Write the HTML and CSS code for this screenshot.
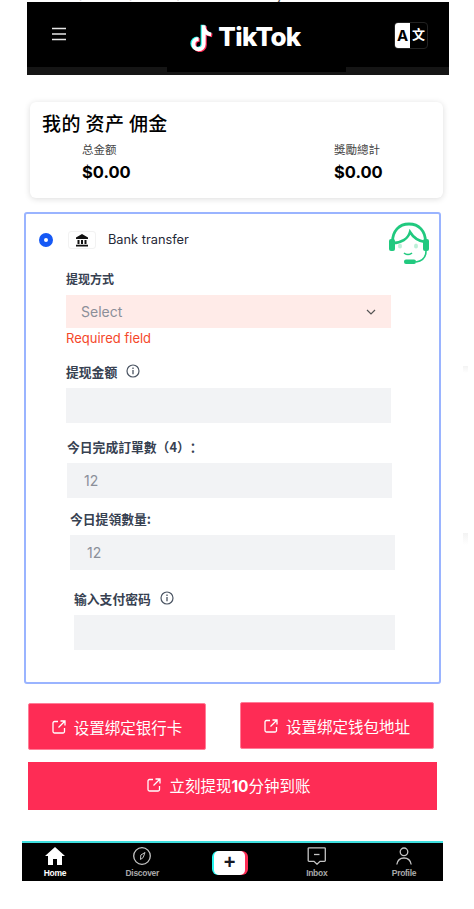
FILE: index.html
```html
<!DOCTYPE html>
<html lang="zh">
<head>
<meta charset="utf-8">
<title>TikTok</title>
<link rel="stylesheet" href="styles.css">
</head>
<body>
<div class="smudge smudge-a"></div>
<div class="smudge smudge-b"></div>
<header class="header">
  <div class="ticker"><div class="ticker-text">Your assets and share them with your followers to show</div></div>
  <div class="bar">
    <svg class="menu" width="14" height="14" viewBox="0 0 14 14"><path d="M0 1.500h14M0 7h14M0 12.500h14" stroke="#e6e6e6" stroke-width="1.600"/></svg>
    <div class="logo">
      <svg width="24" height="29" viewBox="2 0 21 25.400">
        <path d="M14 2v16.500a4.500 4.500 0 1 1-4.500-4.500M14 4c.6 3.500 3 5.500 6.500 6" fill="none" stroke="#25f4ee" stroke-width="3.400" transform="translate(-1 -.5)"/>
        <path d="M14 2v16.500a4.500 4.500 0 1 1-4.500-4.500M14 4c.6 3.500 3 5.500 6.500 6" fill="none" stroke="#fe2c55" stroke-width="3.400" transform="translate(1 .8)"/>
        <path d="M14 2v16.500a4.500 4.500 0 1 1-4.500-4.500M14 4c.6 3.500 3 5.500 6.500 6" fill="none" stroke="#fff" stroke-width="3.400"/>
      </svg>
      <span class="logo-text">TikTok</span>
    </div>
    <div class="lang"><span class="lang-a">A</span><span class="lang-b">文</span></div>
  </div>
  <div class="strip"><div class="strip-mid"></div></div>
</header>

<section class="card">
  <h1 class="card-title">我的 资产 佣金</h1>
  <div class="stats">
    <div class="stat"><div class="stat-label">总金额</div><div class="stat-value">$0.00</div></div>
    <div class="stat"><div class="stat-label">獎勵總計</div><div class="stat-value">$0.00</div></div>
  </div>
</section>

<section class="panel">
  <svg class="agent" width="42" height="44" viewBox="0 0 42 44" fill="none">
    <path d="M4.500 20C4.500 9 11 2 21 2s16.500 7 16.500 18" stroke="#21c97f" stroke-width="2.800"/>
    <path d="M5 21c8 0 15-4 17-11 3 5 8 9 15 10" stroke="#21c97f" stroke-width="2.600"/>
    <rect x="1" y="17" width="6" height="12" rx="2" fill="#21c97f"/>
    <rect x="35" y="17" width="6" height="12" rx="2" fill="#21c97f"/>
    <path d="M38 29c0 6-4 10-10 11" stroke="#21c97f" stroke-width="1.600"/>
    <rect x="16" y="37.500" width="12" height="4.500" rx="2" fill="#21c97f"/>
    <path d="M16 31c2 2 6 2 8 0" stroke="#21c97f" stroke-width="1.600"/>
    <ellipse cx="12" cy="24" rx="2" ry="2.600" fill="#bdf0d8"/>
    <ellipse cx="28" cy="24" rx="2" ry="2.600" fill="#bdf0d8"/>
  </svg>
  <div class="method">
    <span class="radio"></span>
    <span class="bank-box">
      <svg width="14" height="14" viewBox="0 0 14 14"><path d="M7 1 1 4.500v1.500h12V4.500zM2.500 7h2v4h-2zM6 7h2v4H6zM9.500 7h2v4h-2zM1 11.800h12V13.500H1z" fill="#111"/></svg>
    </span>
    <span class="method-name">Bank transfer</span>
  </div>

  <div class="field f-a f-first">
    <label class="label label-small">提现方式</label>
    <div class="input select">
      <span class="select-text">Select</span>
      <svg width="10" height="6" viewBox="0 0 10 6" fill="none"><path d="M1 1l4 4 4-4" stroke="#555" stroke-width="1.200"/></svg>
    </div>
    <div class="error">Required field</div>
  </div>

  <div class="field f-a f-amount">
    <label class="label">提现金额
      <svg class="info" width="14" height="14" viewBox="0 0 14 14" fill="none"><circle cx="7" cy="7" r="6" stroke="#4b5563" stroke-width="1.200"/><path d="M7 6v4.200M7 3.600v1.400" stroke="#4b5563" stroke-width="1.300"/></svg>
    </label>
    <div class="input"></div>
  </div>

  <div class="field f-b f-orders">
    <label class="label">今日完成訂單數（4）：</label>
    <div class="input"><span class="value">12</span></div>
  </div>

  <div class="field f-c f-claims">
    <label class="label">今日提領數量:</label>
    <div class="input"><span class="value">12</span></div>
  </div>

  <div class="field f-d f-pass">
    <label class="label">输入支付密码
      <svg class="info" width="14" height="14" viewBox="0 0 14 14" fill="none"><circle cx="7" cy="7" r="6" stroke="#4b5563" stroke-width="1.200"/><path d="M7 6v4.200M7 3.600v1.400" stroke="#4b5563" stroke-width="1.300"/></svg>
    </label>
    <div class="input"></div>
  </div>
</section>

<div class="btn-row">
  <a class="btn btn-card">
    <svg class="ext" width="14" height="14" viewBox="0 0 14 14" fill="none"><path d="M6 1.500H2.500a1.500 1.500 0 0 0-1.500 1.500v8.500A1.500 1.500 0 0 0 2.500 13H11a1.500 1.500 0 0 0 1.500-1.500V8M8.500 1H13v4.500M13 1 6.500 7.500" stroke="#fff" stroke-width="1.300"/></svg>
    设置绑定银行卡
  </a>
  <a class="btn btn-wallet">
    <svg class="ext" width="14" height="14" viewBox="0 0 14 14" fill="none"><path d="M6 1.500H2.500a1.500 1.500 0 0 0-1.500 1.500v8.500A1.500 1.500 0 0 0 2.500 13H11a1.500 1.500 0 0 0 1.500-1.500V8M8.500 1H13v4.500M13 1 6.500 7.500" stroke="#fff" stroke-width="1.300"/></svg>
    设置绑定钱包地址
  </a>
</div>
<a class="btn btn-wide">
  <svg class="ext" width="14" height="14" viewBox="0 0 14 14" fill="none"><path d="M6 1.500H2.500a1.500 1.500 0 0 0-1.500 1.500v8.500A1.500 1.500 0 0 0 2.500 13H11a1.500 1.500 0 0 0 1.500-1.500V8M8.500 1H13v4.500M13 1 6.500 7.500" stroke="#fff" stroke-width="1.300"/></svg>
  <span>立刻提现<b class="btn-num">10</b>分钟到账</span>
</a>

<nav class="nav">
  <div class="nav-item active">
    <svg width="20" height="18" viewBox="0 0 20 18"><path d="M10 0 0 9h3v9h5v-6h4v6h5V9h3z" fill="#fff"/></svg>
    <span class="nav-label">Home</span>
  </div>
  <div class="nav-item">
    <svg width="20" height="18" viewBox="0 0 20 18" fill="none"><circle cx="10" cy="9" r="8.300" stroke="#c4c4c4" stroke-width="1.300"/><path d="M13 5.500 11.200 10.500 8.500 12.500 8.800 8z" stroke="#c4c4c4" stroke-width="1"/></svg>
    <span class="nav-label">Discover</span>
  </div>
  <div class="nav-item">
    <div class="plus"><div class="plus-inner">+</div></div>
  </div>
  <div class="nav-item">
    <svg width="20" height="18" viewBox="0 0 20 18" fill="none"><path d="M2 .8h15.500a.8.8 0 0 1 .8.800V13.500a.8.8 0 0 1-.8.800H13L10 17.200 7 14.300H2a.8.800 0 0 1-.8-.8V1.600A.8.800 0 0 1 2 .8z" stroke="#c4c4c4" stroke-width="1.300"/><path d="M7 7.500h5.500" stroke="#c4c4c4" stroke-width="1.300"/></svg>
    <span class="nav-label">Inbox</span>
  </div>
  <div class="nav-item">
    <svg width="20" height="18" viewBox="0 0 20 18" fill="none"><circle cx="10" cy="4.800" r="3.800" stroke="#c4c4c4" stroke-width="1.300"/><path d="M2.800 17.500c.8-4.500 3.500-6.500 7.200-6.500s6.400 2 7.200 6.500" stroke="#c4c4c4" stroke-width="1.300"/></svg>
    <span class="nav-label">Profile</span>
  </div>
</nav>
</body>
</html>
```
FILE: styles.css
```css
* { box-sizing: border-box; }
html, body { margin: 0; padding: 0; background: #fff; }
body {
  position: relative;
  width: 474px;
  height: 909px;
  overflow: hidden;
  font-family: Inter, "Noto Sans CJK SC", sans-serif;
  color: #1f2937;
}

.smudge {
  position: absolute;
  left: 463px;
  width: 5px;
  height: 12px;
  background: linear-gradient(#f3f3f3, #fff);
}
.smudge-a { top: 366px; height: 7px; }
.smudge-b { top: 533px; }

.header { width: 422px; margin-left: 27px; }
.ticker { height: 2px; overflow: hidden; background: #fff; }
.ticker-text {
  margin-top: -13px;
  height: 15px;
  text-align: center;
  font-size: 15px;
  line-height: 15px;
  color: #555;
  white-space: nowrap;
}
.bar {
  height: 65px;
  background: #000;
  display: flex;
  align-items: center;
  justify-content: space-between;
  padding: 0 21px 0 25px;
  position: relative;
}
.menu { display: block; margin-top: -1px; }
.logo {
  display: flex;
  align-items: center;
  gap: 4px;
  margin: 5px 0 0 31px;
}
.logo-text {
  font-family: Inter, sans-serif;
  font-weight: 800;
  font-size: 26px;
  line-height: 28px;
  letter-spacing: -0.6px;
  color: #fff;
}
.lang {
  width: 34px;
  height: 27px;
  margin-top: 2px;
  border: 1px solid #222;
  border-radius: 4px;
  display: flex;
  align-items: stretch;
  overflow: hidden;
  font-family: "Noto Sans CJK SC", sans-serif;
  font-weight: 700;
}
.lang-a {
  width: 15px;
  background: #fff;
  color: #000;
  font-family: Inter, sans-serif;
  font-size: 15px;
  line-height: 25px;
  text-align: center;
}
.lang-b {
  flex: 1;
  color: #fff;
  font-size: 13px;
  line-height: 21px;
  text-align: center;
}
.strip {
  height: 8px;
  background: #151515;
  display: flex;
  justify-content: center;
}
.strip-mid { width: 179px; height: 5px; background: #000; margin-left: 37px; }

.card {
  width: 413px;
  height: 96px;
  margin: 27px 0 0 30px;
  padding: 9px 12px 0;
  background: #fff;
  border-radius: 6px;
  box-shadow: 0 1px 6px rgba(0, 0, 0, 0.14);
}
.card-title {
  margin: 0;
  font-family: "Noto Sans CJK SC", sans-serif;
  font-size: 19px;
  line-height: 24px;
  letter-spacing: 0.4px;
  font-weight: 500;
  color: #000;
}
.stats {
  display: flex;
  justify-content: space-between;
  margin: 7px 49px 0 40px;
}
.stat { width: 48px; }
.stat-label {
  font-family: "Noto Sans CJK SC", sans-serif;
  font-size: 11.500px;
  line-height: 15px;
  color: #444;
  white-space: nowrap;
}
.stat-value {
  margin-top: 4px;
  font-family: Inter, sans-serif;
  font-size: 16.500px;
  line-height: 22px;
  font-weight: 700;
  color: #000;
  white-space: nowrap;
}

.panel {
  position: relative;
  width: 417px;
  height: 472px;
  margin: 14px 0 0 24px;
  border: 2px solid #9ab4ff;
  border-radius: 3px;
  background: #fff;
}
.agent { position: absolute; top: 8px; right: 9px; }
.method {
  display: flex;
  align-items: center;
  height: 18px;
  margin: 17px 0 0 13px;
}
.radio {
  width: 14px;
  height: 14px;
  border-radius: 50%;
  border: 5px solid #1659f5;
  background: #fff;
  flex: none;
}
.bank-box {
  width: 28px;
  height: 18px;
  margin-left: 15px;
  border: 1px solid #f2f2f2;
  border-radius: 3px;
  display: flex;
  align-items: center;
  justify-content: center;
}
.method-name {
  margin-left: 12px;
  font-size: 12.800px;
  line-height: 16px;
  color: #1f2937;
}

.field { display: block; }
.f-a { margin-left: 40px; width: 325px; }
.f-b { margin-left: 41px; width: 325px; }
.f-c { margin-left: 44px; width: 325px; }
.f-d { margin-left: 48px; width: 321px; }
.f-first { margin-top: 21px; }
.f-amount { margin-top: 16px; }
.f-orders { margin-top: 15px; }
.f-claims { margin-top: 12px; }
.f-pass { margin-top: 20px; }

.label {
  display: flex;
  align-items: center;
  height: 16px;
  margin-bottom: 9px;
  font-family: "Noto Sans CJK SC", sans-serif;
  font-size: 12.800px;
  font-weight: 600;
  color: #374151;
  white-space: nowrap;
  text-spacing-trim: space-all;
}
.label-small { font-size: 12px; }
.info { margin-left: 9px; }
.input {
  height: 35px;
  background: #f2f3f5;
  display: flex;
  align-items: center;
  padding: 0 15px 0 17px;
}
.select {
  height: 33px;
  background: #ffebe8;
  justify-content: space-between;
  padding: 0 15px;
}
.select-text { font-size: 14px; color: #8b8f99; }
.value { font-size: 14px; color: #8b8f99; }
.error {
  height: 18px;
  margin-top: 1px;
  font-size: 13px;
  line-height: 18px;
  color: #f5472a;
}

.btn {
  display: flex;
  align-items: center;
  justify-content: center;
  background: #fe2c55;
  color: #fff;
  font-family: "Noto Sans CJK SC", sans-serif;
  font-size: 15.500px;
  gap: 8px;
}
.ext { flex: none; }
.btn-row {
  display: flex;
  align-items: flex-start;
  margin: 18px 0 0 28px;
}
.btn-card {
  width: 178px;
  height: 47px;
  margin-top: 1px;
  border: 1px solid #ff7d97;
  border-radius: 2px;
}
.btn-wallet {
  width: 194px;
  height: 47px;
  margin-left: 34px;
  border: 1px solid #ff7d97;
  border-radius: 2px;
}
.btn-wide {
  width: 409px;
  height: 48px;
  margin: 12px 0 0 28px;
  padding: 0 7px 3px 0;
}
.btn-num { font-family: Inter, sans-serif; font-weight: 700; }

.nav {
  width: 421px;
  height: 40px;
  margin: 31px 0 0 22px;
  background: #000;
  border-top: 2px solid #3fe0e0;
  display: flex;
  gap: 21.250px;
}
.nav-item {
  width: 66px;
  display: flex;
  flex-direction: column;
  align-items: center;
  padding-top: 4px;
}
.nav-label {
  margin-top: 2px;
  font-family: "Liberation Sans", sans-serif;
  font-size: 8.500px;
  letter-spacing: -0.300px;
  line-height: 12px;
  font-weight: 700;
  color: #a8a8a8;
}
.active .nav-label { color: #fff; }
.plus {
  width: 36px;
  height: 24px;
  margin-top: 4px;
  border-radius: 6px;
  background: linear-gradient(90deg, #25f4ee 0 50%, #fe2c55 50% 100%);
  padding: 0 2.500px;
}
.plus-inner {
  height: 24px;
  background: #fff;
  border-radius: 5px;
  text-align: center;
  font-family: "Liberation Sans", sans-serif;
  font-size: 20px;
  line-height: 23px;
  font-weight: 700;
  color: #161823;
}
```
